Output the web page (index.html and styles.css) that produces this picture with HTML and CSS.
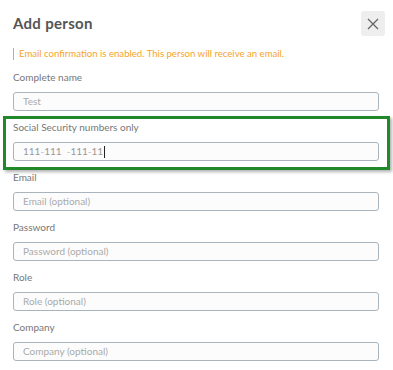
FILE: index.html
```html
<!DOCTYPE html>
<html>
<head>
<meta charset="utf-8">
<link rel="stylesheet" href="styles.css">
</head>
<body>
<div class="dialog">
  <div class="header">
    <h1 class="title">Add person</h1>
    <button class="close" aria-label="Close">
      <svg width="12" height="12" viewBox="0 0 12 12"><path d="M1 1L11 11M11 1L1 11" stroke="#666" stroke-width="1.3" fill="none"/></svg>
    </button>
  </div>
  <div class="notice">Email confirmation is enabled. This person will receive an email.</div>
  <div class="fields">
    <div class="field">
      <label class="label">Complete name</label>
      <div class="input"><span class="ph">Test</span></div>
    </div>
    <div class="field highlighted">
      <label class="label">Social Security numbers only</label>
      <div class="input"><span class="val">111<span class="dash">-</span>111&nbsp;&nbsp;<span class="dash">-</span>111<span class="dash">-</span>11</span><span class="caret"></span></div>
    </div>
    <div class="field">
      <label class="label">Email</label>
      <div class="input"><span class="ph">Email (optional)</span></div>
    </div>
    <div class="field">
      <label class="label">Password</label>
      <div class="input"><span class="ph">Password (optional)</span></div>
    </div>
    <div class="field">
      <label class="label">Role</label>
      <div class="input"><span class="ph">Role (optional)</span></div>
    </div>
    <div class="field">
      <label class="label">Company</label>
      <div class="input"><span class="ph">Company (optional)</span></div>
    </div>
  </div>
</div>
</body>
</html>
```
FILE: styles.css
```css
* { box-sizing: border-box; }
html, body { margin: 0; padding: 0; background: #fff; }
body { font-family: Lato, "Open Sans", sans-serif; width: 393px; height: 370px; overflow: hidden; }
.dialog { padding: 11px 8px 0 13px; }
.header { display: flex; justify-content: space-between; align-items: flex-start; height: 37px; }
.title { margin: 2px 0 0; font-size: 15px; font-weight: 700; color: #555; line-height: 20px; letter-spacing: 0.3px; }
.close { width: 24px; height: 25px; border: none; border-radius: 3px; background: #eeeeee; display: flex; align-items: center; justify-content: center; padding: 0; }
.notice { border-left: 1px solid #f5a42a; padding-left: 5px; color: #f5a42a; font-size: 9.6px; line-height: 12px; height: 12px; }
.fields { display: flex; flex-direction: column; gap: 10px; margin-top: 11px; width: 366px; }
.field { position: relative; display: flex; flex-direction: column; gap: 9px; }
.label { font-size: 10px; line-height: 12px; color: #777; height: 12px; }
.input { height: 19px; border: 1px solid #aab4bd; border-radius: 3px; background: #fcfcfc; padding-left: 9px; font-size: 10px; line-height: 17px; display: flex; align-items: center; }
.ph { color: #aaa; }
.val { color: #999; }
.dash { color: #bbb; }
.caret { display: inline-block; width: 1px; height: 12px; background: #222; margin-left: 1px; }
.highlighted::before { content: ""; position: absolute; top: -5px; bottom: -9px; left: -10px; right: -11px; border: 3px solid #22892a; box-shadow: 2px 2px 3px rgba(0,0,0,0.3); pointer-events: none; }
```
